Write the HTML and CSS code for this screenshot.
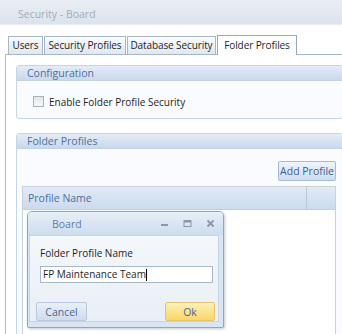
FILE: index.html
```html
<!DOCTYPE html>
<html>
<head>
<meta charset="utf-8">
<link rel="stylesheet" href="styles.css">
</head>
<body>
<div class="window">
  <div class="titlebar">Security - Board</div>
  <div class="tabs">
    <div class="tab t-users">Users</div>
    <div class="tab t-sp">Security Profiles</div>
    <div class="tab t-ds">Database Security</div>
    <div class="tab t-fp active">Folder Profiles</div>
  </div>
  <div class="panel">
    <div class="group config">
      <div class="group-head">Configuration</div>
      <div class="group-body config-body">
        <label class="check"><span class="box"></span>Enable Folder Profile Security</label>
      </div>
    </div>
    <div class="group profiles">
      <div class="group-head">Folder Profiles</div>
      <div class="group-body profiles-body">
        <div class="toolbar"><button class="btn add">Add Profile</button></div>
        <div class="grid">
          <div class="grid-head">
            <div class="col name">Profile Name</div>
            <div class="col rest"></div>
          </div>
          <div class="grid-body"></div>
        </div>
      </div>
    </div>
  </div>

  <div class="dialog">
    <div class="dlg-title">
      <span class="dlg-name">Board</span>
      <span class="dlg-icons">
        <svg width="9" height="9" viewBox="0 0 9 9"><rect x="1" y="5" width="7" height="2" fill="#8b96a6"/></svg>
        <svg width="9" height="9" viewBox="0 0 9 9"><rect x="1" y="1.5" width="7" height="6" fill="none" stroke="#8b96a6" stroke-width="1"/><rect x="1" y="1.5" width="7" height="2" fill="#8b96a6"/></svg>
        <svg width="9" height="9" viewBox="0 0 9 9"><path d="M1.5 1.5 L7.5 7.5 M7.5 1.5 L1.5 7.5" stroke="#8b96a6" stroke-width="1.8"/></svg>
      </span>
    </div>
    <div class="dlg-body">
      <div class="dlg-label">Folder Profile Name</div>
      <div class="dlg-input">FP Maintenance Team<span class="caret"></span></div>
      <div class="dlg-buttons">
        <button class="btn cancel">Cancel</button>
        <button class="btn ok">Ok</button>
      </div>
    </div>
  </div>
</div>
</body>
</html>
```

FILE: styles.css
```css
html, body {
  margin: 0;
  padding: 0;
  background: #ffffff;
}
.window {
  position: relative;
  width: 342px;
  height: 334px;
  overflow: hidden;
  font-family: "Open Sans", "Noto Sans", sans-serif;
  font-size: 10px;
  color: #1e1e1e;
  background: #ffffff;
}
.titlebar {
  height: 25px;
  box-sizing: border-box;
  padding-left: 18px;
  line-height: 28px;
  font-size: 10.5px;
  color: #a3acb8;
  background: linear-gradient(#e9eef4, #dbe3ec);
  border-bottom: 1px solid #e6ecf2;
}
.tabs {
  display: flex;
  margin-top: 11px;
  padding-left: 8px;
  gap: 1px;
  height: 18px;
  position: relative;
  z-index: 2;
}
.tab {
  height: 18px;
  box-sizing: border-box;
  text-align: center;
  white-space: nowrap;
  line-height: 17px;
  border: 1px solid #a9b6c6;
  border-bottom: none;
  background: linear-gradient(#fafcfe, #dfe7f1);
  color: #1f1f1f;
  letter-spacing: -0.1px;
}
.t-users { width: 35px; }
.t-sp { width: 82px; }
.t-ds { width: 89px; }
.t-fp { width: 80px; }
.tab.active {
  height: 20px;
  margin-top: -1px;
  background: #ffffff;
  border-color: #9ba8b8;
  line-height: 19px;
}
.panel {
  margin-left: 5px;
  width: 338px;
  box-sizing: border-box;
  height: 290px;
  border-left: 1px solid #b4bfcc;
  border-top: 1px solid #a9b6c6;
  padding: 10px 0 0 10px;
}
.group {
  border: 1px solid #c7d4e4;
  border-radius: 3px;
  background: #f9fbfe;
}
.group-head {
  height: 14px;
  line-height: 14px;
  padding-left: 10px;
  color: #4f6f9c;
  font-size: 10.5px;
  background: linear-gradient(#e4ecf7, #c9d8ec);
  border-bottom: 1px solid #c2d1e4;
}
.config-body {
  height: 37px;
  display: flex;
  align-items: center;
  padding-left: 16px;
}
.check {
  display: flex;
  align-items: center;
  gap: 5px;
  margin-top: 4px;
}
.box {
  width: 9px;
  height: 9px;
  border: 1px solid #a8b0bb;
  background: linear-gradient(#e3e6ea, #f6f7f9);
}
.profiles {
  margin-top: 14px;
  height: 230px;
}
.profiles-body {
  padding: 12px 6px 0 5px;
}
.toolbar {
  display: flex;
  justify-content: flex-end;
}
.btn {
  font-family: inherit;
  font-size: 10.5px;
  padding: 0;
  margin: 0;
  cursor: default;
}
.add {
  width: 58px;
  height: 20px;
  color: #3f5f8f;
  border: 1px solid #a6bbd6;
  border-radius: 2px;
  background: linear-gradient(#eef4fb, #cddcef);
}
.grid {
  margin-top: 5px;
  border-left: 1px solid #c6d1de;
  border-right: 1px solid #c6d1de;
  height: 160px;
  background: #ffffff;
}
.grid-head {
  display: flex;
  height: 22px;
  border-top: 1px solid #c6d1de;
  border-bottom: 1px solid #c6d1de;
  background: linear-gradient(#e2ebf6, #cbdaee);
}
.col {
  line-height: 22px;
  color: #4f6f9c;
  font-size: 10.5px;
}
.col.name {
  width: 278px;
  padding-left: 5px;
  border-right: 1px solid #b7c7db;
}
.col.rest {
  flex: 1;
}

/* dialog */
.dialog {
  position: absolute;
  left: 27px;
  top: 211px;
  width: 197px;
  height: 117px;
  box-sizing: border-box;
  border: 1px solid #8ea5c3;
  border-radius: 5px 5px 2px 2px;
  background: #d9e5f3;
  box-shadow: 1px 1px 3px rgba(80, 100, 130, 0.35);
  display: flex;
  flex-direction: column;
  z-index: 5;
}
.dlg-title {
  height: 25px;
  display: flex;
  align-items: center;
  justify-content: space-between;
  padding: 0 8px 0 24px;
  background: linear-gradient(#e7eff8, #cfdcee);
  border-radius: 4px 4px 0 0;
}
.dlg-name {
  color: #5d7dab;
  font-size: 10.5px;
}
.dlg-icons {
  display: flex;
  gap: 14px;
  align-items: center;
}
.dlg-body {
  flex: 1;
  margin: 0 4px 5px 1px;
  background: linear-gradient(#f4f7fb, #e9eff7);
  border: 1px solid #c4d3e6;
  padding: 9px 8px 0 10px;
}
.dlg-label {
  height: 16px;
  line-height: 16px;
  color: #1e1e1e;
}
.dlg-input {
  margin-top: 5px;
  width: 173px;
  height: 17px;
  box-sizing: border-box;
  border: 1px solid #abb8c8;
  background: #ffffff;
  line-height: 15px;
  padding-left: 2px;
  display: flex;
  align-items: center;
}
.caret {
  display: inline-block;
  width: 1px;
  height: 12px;
  background: #000;
}
.dlg-buttons {
  display: flex;
  justify-content: space-between;
  margin-top: 19px;
  margin-left: -4px;
  margin-right: -5px;
}
.cancel {
  width: 51px;
  height: 19px;
  color: #4c6791;
  border: 1px solid #b9c9dc;
  border-radius: 2px;
  background: linear-gradient(#e9f0f8, #cfdcee);
}
.ok {
  width: 50px;
  height: 19px;
  color: #4c6791;
  border: 1px solid #e3c56f;
  border-radius: 2px;
  background: linear-gradient(#fdf0b9, #f9d767);
}
```
